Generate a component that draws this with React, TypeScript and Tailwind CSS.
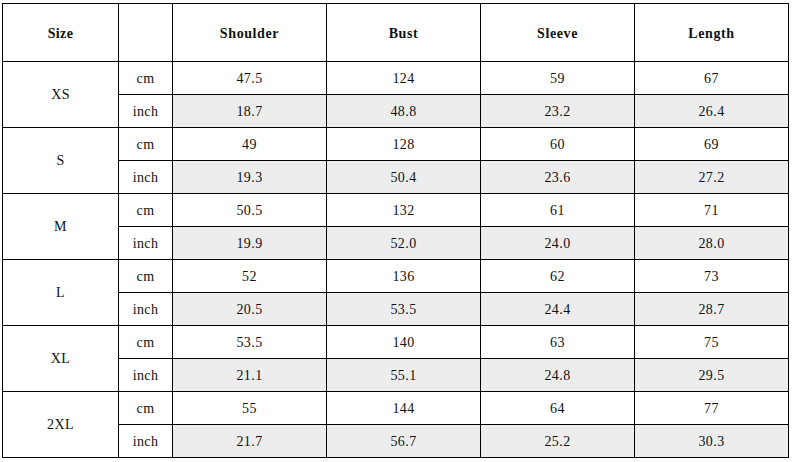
import { Fragment } from "react"

const rows = [
  { size: "XS", cm: ["47.5", "124", "59", "67"], inch: ["18.7", "48.8", "23.2", "26.4"] },
  { size: "S", cm: ["49", "128", "60", "69"], inch: ["19.3", "50.4", "23.6", "27.2"] },
  { size: "M", cm: ["50.5", "132", "61", "71"], inch: ["19.9", "52.0", "24.0", "28.0"] },
  { size: "L", cm: ["52", "136", "62", "73"], inch: ["20.5", "53.5", "24.4", "28.7"] },
  { size: "XL", cm: ["53.5", "140", "63", "75"], inch: ["21.1", "55.1", "24.8", "29.5"] },
  { size: "2XL", cm: ["55", "144", "64", "77"], inch: ["21.7", "56.7", "25.2", "30.3"] },
]

const heads = ["Shoulder", "Bust", "Sleeve", "Length"]

export default function App() {
  return (
    <div className="min-h-screen bg-white pl-[2px] pt-[3px] font-['Liberation_Serif','Times_New_Roman',serif] text-[14px] tracking-[0.4px] text-[#111]">
      <div className="grid w-[787px] grid-cols-[115px_53px_153px_153px_153px_153px] grid-rows-[57px_repeat(12,32px)] gap-px bg-black p-px">
        {/* header */}
        <div className="flex items-center justify-center bg-white pt-[2px] font-bold">Size</div>
        <div className="bg-white" />
        {heads.map((h) => (
          <div key={h} className="flex items-center justify-center bg-white pt-[2px] font-bold tracking-[0.6px]">
            {h}
          </div>
        ))}

        {rows.map((r) => (
          <Fragment key={r.size}>
            <div className="row-span-2 flex items-center justify-center bg-white">{r.size}</div>
            <div className="flex items-center justify-center bg-white">cm</div>
            {r.cm.map((v, i) => (
              <div key={"c" + i} className="flex items-center justify-center bg-white">
                {v}
              </div>
            ))}
            <div className="flex items-center justify-center bg-white">inch</div>
            {r.inch.map((v, i) => (
              <div key={"i" + i} className="flex items-center justify-center bg-[#ededed]">
                {v}
              </div>
            ))}
          </Fragment>
        ))}
      </div>
    </div>
  )
}
